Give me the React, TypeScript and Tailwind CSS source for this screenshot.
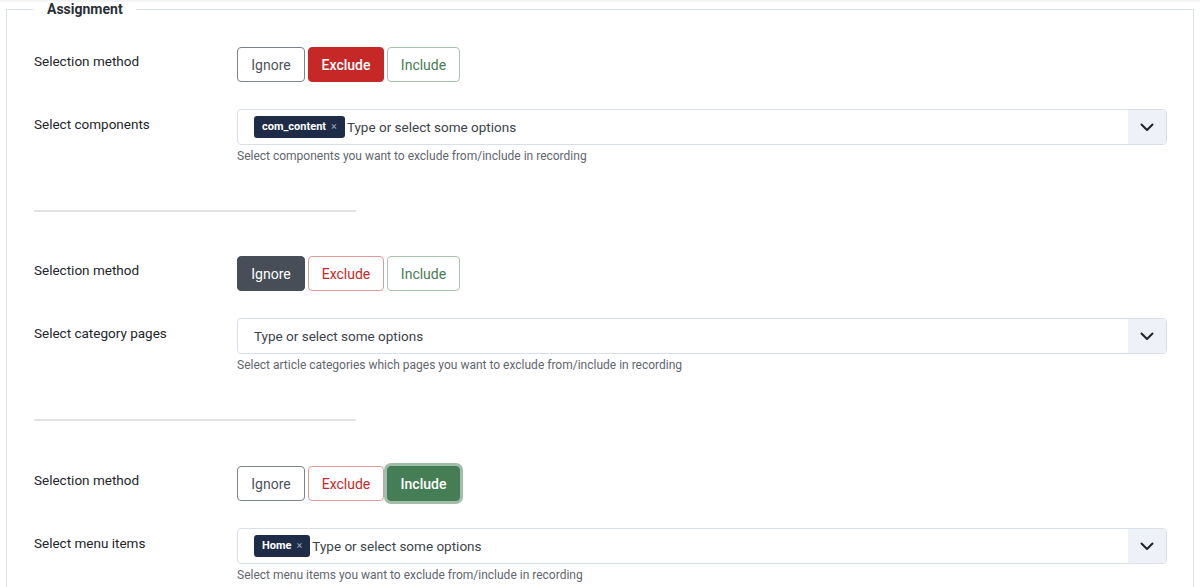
import React from "react";

type Mode = "ignore" | "exclude" | "include";

function Chevron() {
  return (
    <svg width="14" height="9" viewBox="0 0 14 9" fill="none">
      <path d="M1.5 1.5 L7 7 L12.5 1.5" stroke="#1f2328" strokeWidth="2" strokeLinecap="round" strokeLinejoin="round" />
    </svg>
  );
}

function Buttons({ active }: { active: Mode }) {
  const base = "h-[35px] rounded-[4px] border text-[14px] leading-[20px] flex items-center justify-center";
  return (
    <div className="flex gap-[3px]">
      <div
        className={
          base +
          " w-[68px] " +
          (active === "ignore"
            ? "bg-[#474e57] border-[#474e57] text-white"
            : "bg-white border-[#7d838a] text-[#4d545c]")
        }
      >
        Ignore
      </div>
      <div
        className={
          base +
          " w-[76px] " +
          (active === "exclude"
            ? "bg-[#c52827] border-[#c52827] text-white font-medium"
            : "bg-white border-[#e09a9a] text-[#c52827]")
        }
      >
        Exclude
      </div>
      <div
        className={
          base +
          " w-[73px] " +
          (active === "include"
            ? "bg-[#457d54] border-[#457d54] text-white font-medium ring-[3px] ring-[#457d54]/50"
            : "bg-white border-[#a7c3ae] text-[#457d54]")
        }
      >
        Include
      </div>
    </div>
  );
}

function Select({ tag }: { tag?: string }) {
  return (
    <div className="h-[36px] flex border border-[#d9dfe8] rounded-[4px] bg-white overflow-hidden">
      <div className="flex-1 flex items-center pl-[16px]">
        {tag && (
          <span className="h-[22px] flex items-center bg-[#1e2c47] rounded-[3px] pl-[8px] pr-[8px] mr-[2px]">
            <span className="text-white font-bold text-[11px] leading-[14px]">{tag}</span>
            <span className="text-[#9aa3b2] text-[11px] leading-[14px] ml-[5px]">×</span>
          </span>
        )}
        <span className="text-[13.5px] text-[#3d434a]">Type or select some options</span>
      </div>
      <div className="w-[38px] bg-[#eef2f8] flex items-center justify-center">
        <Chevron />
      </div>
    </div>
  );
}

function Group({
  active,
  label,
  tag,
  help,
  sep,
}: {
  active: Mode;
  label: string;
  tag?: string;
  help: string;
  sep?: "a" | "b";
}) {
  return (
    <div>
      <div className="grid grid-cols-[203px_1fr]">
        <div className="pt-[4px] text-[13.5px] leading-[20px] text-[#22262a]">Selection method</div>
        <Buttons active={active} />
      </div>
      <div className="grid grid-cols-[203px_1fr] mt-[27px]">
        <div className="pt-[5px] text-[13.5px] leading-[20px] text-[#22262a]">{label}</div>
        <div>
          <Select tag={tag} />
          <div className="mt-[2px] text-[12px] leading-[18px] text-[#5f666e]">{help}</div>
        </div>
      </div>
      {sep === "a" && <div className="mt-[45px] mb-[44px] w-[322px] h-[2px] bg-[#e3e3e3]" />}
      {sep === "b" && <div className="mt-[45px] mb-[45px] w-[322px] h-[2px] bg-[#e3e3e3]" />}
    </div>
  );
}

export default function App() {
  return (
    <div className="w-full h-[587px] overflow-hidden bg-white" style={{ fontFamily: "Roboto, 'Liberation Sans', sans-serif" }}>
      <div className="h-[2px] bg-[#f3f4f6]" />
      <fieldset className="ml-[6px] mr-[6px] border border-[#dde3ec] pl-[27px] pr-[26px] pt-0 pb-[40px] -mt-[2px] min-w-0">
        <legend className="px-[13px] text-[14px] leading-[18px] font-bold text-[#2a2f36]">Assignment</legend>
        <div className="mt-[29px]">
          <Group
            active="exclude"
            label="Select components"
            tag="com_content"
            help="Select components you want to exclude from/include in recording"
            sep="a"
          />
          <Group
            active="ignore"
            label="Select category pages"
            help="Select article categories which pages you want to exclude from/include in recording"
            sep="b"
          />
          <Group
            active="include"
            label="Select menu items"
            tag="Home"
            help="Select menu items you want to exclude from/include in recording"
          />
        </div>
      </fieldset>
    </div>
  );
}
